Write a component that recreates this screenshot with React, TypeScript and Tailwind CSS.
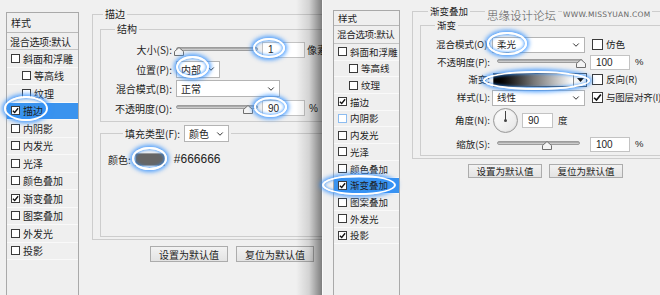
import { ChevronDown } from "lucide-react";

type Item = { t: string; indent?: boolean; on?: boolean; blue?: boolean };

const leftItems: Item[] = [
  { t: "斜面和浮雕" },
  { t: "等高线", indent: true },
  { t: "纹理", indent: true },
  { t: "描边", on: true },
  { t: "内阴影" },
  { t: "内发光" },
  { t: "光泽" },
  { t: "颜色叠加" },
  { t: "渐变叠加", on: true },
  { t: "图案叠加" },
  { t: "外发光" },
  { t: "投影" },
];

const rightItems: Item[] = [
  { t: "斜面和浮雕" },
  { t: "等高线", indent: true },
  { t: "纹理", indent: true },
  { t: "描边", on: true },
  { t: "内阴影", blue: true },
  { t: "内发光" },
  { t: "光泽" },
  { t: "颜色叠加" },
  { t: "渐变叠加", on: true },
  { t: "图案叠加" },
  { t: "外发光" },
  { t: "投影", on: true },
];

function Check({ on, blue, big }: { on?: boolean; blue?: boolean; big?: boolean }) {
  return (
    <span
      className={`flex shrink-0 items-center justify-center border bg-white ${
        big ? "h-[11px] w-[11px]" : "h-[9px] w-[9px]"
      } ${blue ? "border-[#8cbcf0]" : "border-[#3a3a3a]"}`}
    >
      {on && (
        <svg viewBox="0 0 8 8" className={big ? "h-[9px] w-[9px]" : "h-[7px] w-[7px]"}>
          <path d="M1 4.2 L3.1 6.3 L7 1.4" fill="none" stroke="#111" strokeWidth="1.5" />
        </svg>
      )}
    </span>
  );
}

function StyleList({
  items,
  selected,
  box,
  headH,
  mixH,
  rowH,
}: {
  items: Item[];
  selected: number;
  box: string;
  headH: string;
  mixH: string;
  rowH: string;
}) {
  return (
    <div className={`flex shrink-0 flex-col overflow-hidden whitespace-nowrap border border-[#a9a9a9] bg-[#efefef] ${box}`}>
      <div className={`flex items-center border-b border-[#b9b9b9] pl-[4px] ${headH}`}>样式</div>
      <div className={`flex items-center border-b border-[#c4c4c4] pl-[3px] tracking-[-0.3px] ${mixH}`}>混合选项:默认</div>
      {items.map((it, i) => (
        <div
          key={it.t}
          className={`flex items-center gap-[3px] border-b border-[#f9f9f9] ${rowH} ${
            it.indent ? "pl-[15px]" : "pl-[4px]"
          } ${i === selected ? "bg-[#3a93ee]" : ""}`}
        >
          <Check on={it.on} blue={it.blue} />
          <span>{it.t}</span>
        </div>
      ))}
    </div>
  );
}

function Slider({ w, thumb }: { w: string; thumb: string }) {
  return (
    <div className={`relative h-[12px] shrink-0 ${w}`}>
      <div className="absolute left-0 right-0 top-[3px] h-[4px] rounded-[2px] border border-[#9c9c9c] bg-gradient-to-b from-[#9a9a9a] to-[#dedede]" />
      <svg className={`absolute top-[3px] ${thumb}`} width="10" height="9" viewBox="0 0 10 9">
        <path d="M5 0.5 L9.5 4.5 V8.5 H0.5 V4.5 Z" fill="#f4f4f4" stroke="#6f6f6f" />
      </svg>
    </div>
  );
}

function Select({ w, text, h = "h-[17px]" }: { w: string; text: string; h?: string }) {
  return (
    <div
      className={`flex shrink-0 items-center justify-between border border-[#b4b4b4] bg-white pl-[4px] pr-[3px] ${h} ${w}`}
    >
      <span>{text}</span>
      <ChevronDown size={10} strokeWidth={2.4} className="text-[#333]" />
    </div>
  );
}

function Input({ w, v, h = "h-[16px]" }: { w: string; v: string; h?: string }) {
  return (
    <div
      className={`flex shrink-0 items-center border border-[#c3c3c3] bg-white pl-[5px] font-['Liberation_Sans',sans-serif] text-[10px] ${h} ${w}`}
    >
      {v}
    </div>
  );
}

function Button({ text, cls }: { text: string; cls: string }) {
  return (
    <div
      className={`flex items-center justify-center border border-[#acacac] bg-gradient-to-b from-[#f2f2f2] to-[#e3e3e3] ${cls}`}
    >
      {text}
    </div>
  );
}

function Ring({ cls }: { cls: string }) {
  return (
    <div
      className={`pointer-events-none absolute rounded-[50%] border-2 border-white shadow-[0_0_4px_2px_rgba(50,145,255,0.85),inset_0_0_3px_1px_rgba(50,145,255,0.75)] ${cls}`}
    />
  );
}

function LeftDialog() {
  return (
    <div className="relative flex h-full w-[322px] shrink-0 items-start overflow-hidden pl-[6px] text-[10px]">
      <StyleList
        items={leftItems}
        selected={3}
        box="mt-[12px] h-[300px] w-[73px]"
        headH="h-[20px]"
        mixH="h-[17px]"
        rowH="h-[17.5px]"
      />

      <div className="ml-[13px] mt-[7px] w-[250px] shrink-0">
        <fieldset className="border border-[#cdcdcd] pb-[2px] pl-[7px]">
          <legend className="ml-[3px] px-[2px] leading-[14px]">描边</legend>

          <fieldset className="mt-[1px] border border-[#cdcdcd] pb-[3px] pt-[4px]">
            <legend className="ml-[14px] px-[2px] leading-[14px]">结构</legend>
            <div className="flex h-[19.5px] items-center">
              <span className="w-[71px] text-right">大小(S):</span>
              <div className="ml-[4px]">
                <Slider w="w-[82px]" thumb="left-[-2px]" />
              </div>
              <div className="ml-[4px]">
                <Input w="w-[43px]" v="1" />
              </div>
              <span className="ml-[2px] whitespace-nowrap">像素</span>
            </div>
            <div className="flex h-[19.5px] items-center">
              <span className="w-[71px] text-right">位置(P):</span>
              <div className="ml-[4px]">
                <Select w="w-[44px]" text="内部" />
              </div>
            </div>
            <div className="flex h-[19.5px] items-center">
              <span className="w-[71px] text-right">混合模式(B):</span>
              <div className="ml-[4px]">
                <Select w="w-[104px]" text="正常" />
              </div>
            </div>
            <div className="flex h-[19.5px] items-center">
              <span className="w-[71px] text-right">不透明度(O):</span>
              <div className="ml-[4px]">
                <Slider w="w-[82px]" thumb="left-[67px]" />
              </div>
              <div className="ml-[4px]">
                <Input w="w-[43px]" v="90" />
              </div>
              <span className="ml-[4px] font-['Liberation_Sans',sans-serif]">%</span>
            </div>
          </fieldset>

          <fieldset className="mt-[3px] h-[112px] border border-[#cdcdcd]">
            <legend className="ml-[22px] flex items-center gap-[4px] px-[2px]">
              <span>填充类型(F):</span>
              <Select w="w-[45px]" text="颜色" />
            </legend>
            <div className="mt-[9px] flex h-[16px] items-center pl-[7px]">
              <span>颜色:</span>
              <div className="ml-[4px] h-[13px] w-[30px] border border-[#9a9a9a] bg-[#666666]" />
              <span className="ml-[9px] font-['Liberation_Sans',sans-serif] text-[12px] text-[#222]">#666666</span>
            </div>
          </fieldset>
        </fieldset>

        <div className="mt-[6px] flex gap-[8px] pl-[58px]">
          <Button text="设置为默认值" cls="h-[16px] w-[78px]" />
          <Button text="复位为默认值" cls="h-[16px] w-[78px]" />
        </div>
      </div>

      {/* shadow cast by the front dialog */}
      <div className="pointer-events-none absolute bottom-0 right-0 top-0 w-[26px] bg-gradient-to-r from-transparent via-[rgba(0,0,0,0.12)] to-[rgba(0,0,0,0.48)]" />
    </div>
  );
}

function RightDialog() {
  return (
    <div className="relative flex h-full flex-1 items-start overflow-hidden border-l border-[#fbfbfb] pl-[10px] text-[9.5px]">
      <StyleList
        items={rightItems}
        selected={8}
        box="mt-[10px] h-[300px] w-[67px]"
        headH="h-[15px]"
        mixH="h-[18px]"
        rowH="h-[16.7px]"
      />

      <div className="ml-[12px] mt-[5px] w-[262px] shrink-0">
        <fieldset className="border border-[#cdcdcd] pb-[2px] pl-[7px]">
          <legend className="ml-[8px] px-[2px] leading-[13px]">渐变叠加</legend>

          <fieldset className="mt-[1px] border border-[#cdcdcd] pt-[4px]">
            <legend className="ml-[14px] px-[2px] leading-[13px]">渐变</legend>

            <div className="flex h-[17px] items-center">
              <span className="w-[69px] text-right">混合模式(O):</span>
              <div className="ml-[2px]">
                <Select w="w-[93px]" text="柔光" h="h-[16px]" />
              </div>
              <div className="ml-[7px] flex items-center gap-[3px]">
                <Check big />
                <span>仿色</span>
              </div>
            </div>

            <div className="flex h-[18px] items-center">
              <span className="w-[69px] text-right">不透明度(P):</span>
              <div className="ml-[7px]">
                <Slider w="w-[86px]" thumb="left-[79px]" />
              </div>
              <div className="ml-[7px]">
                <Input w="w-[40px]" v="100" h="h-[15px]" />
              </div>
              <span className="ml-[5px] font-['Liberation_Sans',sans-serif]">%</span>
            </div>

            <div className="flex h-[17px] items-center">
              <span className="w-[69px] text-right">渐变:</span>
              <div className="ml-[3px] flex h-[14px] w-[94px] border border-[#4a4a4a]">
                <div className="flex-1 bg-gradient-to-r from-[#000] via-[#777] to-[#fff]" />
                <div className="flex w-[13px] items-center justify-center border-l border-[#888] bg-[#f7f7f7]">
                  <svg width="7" height="4" viewBox="0 0 7 4">
                    <path d="M0 0 H7 L3.5 4 Z" fill="#111" />
                  </svg>
                </div>
              </div>
              <div className="ml-[5px] flex items-center gap-[3px]">
                <Check big />
                <span>反向(R)</span>
              </div>
            </div>

            <div className="flex h-[19px] items-center">
              <span className="w-[69px] text-right">样式(L):</span>
              <div className="ml-[2px]">
                <Select w="w-[93px]" text="线性" h="h-[16px]" />
              </div>
              <div className="ml-[7px] flex items-center gap-[3px]">
                <Check big on />
                <span className="whitespace-nowrap tracking-[-0.2px]">与图层对齐(I)</span>
              </div>
            </div>

            <div className="flex h-[26px] items-center">
              <span className="w-[69px] text-right">角度(N):</span>
              <div className="relative ml-[3px] h-[25px] w-[25px] rounded-full border border-[#9a9a9a] bg-gradient-to-br from-[#ffffff] to-[#e6e6e6] shadow-[inset_0_0_2px_rgba(0,0,0,0.15)]">
                <div className="absolute left-[11px] top-[2px] h-[10px] w-[1px] bg-[#444]" />
                <div className="absolute left-[10px] top-[10.5px] h-[3px] w-[3px] rounded-full bg-[#444]" />
              </div>
              <div className="ml-[4px]">
                <Input w="w-[31px]" v="90" h="h-[15px]" />
              </div>
              <span className="ml-[5px]">度</span>
            </div>

            <div className="flex h-[22px] items-center">
              <span className="w-[69px] text-right">缩放(S):</span>
              <div className="ml-[7px]">
                <Slider w="w-[83px]" thumb="left-[45px]" />
              </div>
              <div className="ml-[10px]">
                <Input w="w-[40px]" v="100" h="h-[15px]" />
              </div>
              <span className="ml-[5px] font-['Liberation_Sans',sans-serif]">%</span>
            </div>
          </fieldset>
        </fieldset>

        <div className="mt-[5px] flex gap-[7px] pl-[56px]">
          <Button text="设置为默认值" cls="h-[14px] w-[74px]" />
          <Button text="复位为默认值" cls="h-[14px] w-[74px]" />
        </div>
      </div>
    </div>
  );
}

export default function App() {
  return (
    <div className="relative flex h-[295px] w-[660px] overflow-hidden bg-[#f0f0f0] font-['Noto_Sans_CJK_SC','Noto_Sans',sans-serif] text-[#1e1e1e]">
      <LeftDialog />
      <RightDialog />

      {/* watermark */}
      <div className="pointer-events-none absolute left-[485px] top-[6px] flex items-center whitespace-nowrap">
        <span className="bg-[#f0f0f0] px-[2px] text-[11.5px] font-light leading-[18px] text-[#5a5a5a]">思缘设计论坛</span>
        <span className="ml-[4px] bg-[#f0f0f0] px-[1px] font-['DejaVu_Sans',sans-serif] text-[7.5px] leading-[18px] tracking-[0.3px] text-[#666]">
          WWW.MISSYUAN.COM
        </span>
      </div>

      {/* highlight rings */}
      <Ring cls="left-[4px] top-[96px] h-[25px] w-[44px]" />
      <Ring cls="left-[253px] top-[38px] h-[20px] w-[32px]" />
      <Ring cls="left-[176px] top-[56px] h-[22px] w-[33px]" />
      <Ring cls="left-[254px] top-[97px] h-[20px] w-[33px]" />
      <Ring cls="left-[132px] top-[147px] h-[23px] w-[35px]" />
      <Ring cls="left-[322px] top-[175px] h-[20px] w-[74px]" />
      <Ring cls="left-[487px] top-[32px] h-[23px] w-[40px]" />
      <Ring cls="left-[483px] top-[71px] h-[19px] w-[107px]" />
    </div>
  );
}
